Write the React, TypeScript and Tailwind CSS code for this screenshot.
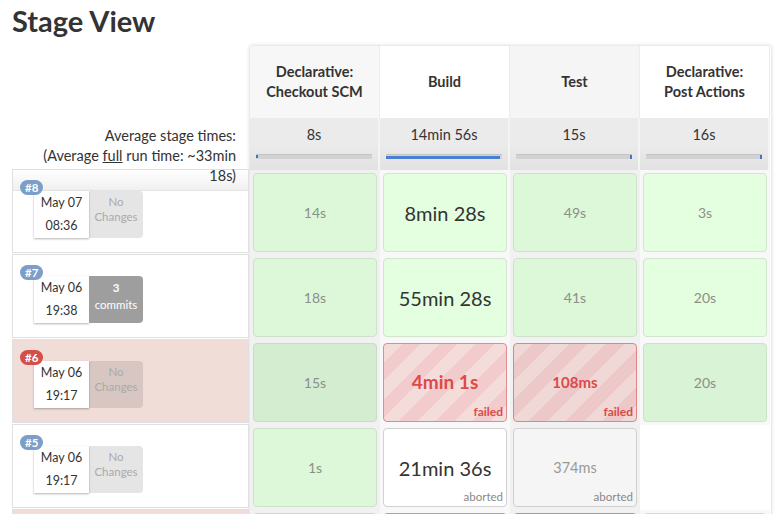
import React from "react";

type Cell = {
  text?: string;
  big?: boolean;
  kind: "ok" | "failed" | "aborted" | "empty";
};

type Run = {
  id: string;
  date: string;
  time: string;
  changes: "none" | string;
  failed?: boolean;
  cells: Cell[];
};

const runs: Run[] = [
  {
    id: "#8",
    date: "May 07",
    time: "08:36",
    changes: "none",
    cells: [
      { text: "14s", kind: "ok" },
      { text: "8min 28s", big: true, kind: "ok" },
      { text: "49s", kind: "ok" },
      { text: "3s", kind: "ok" },
    ],
  },
  {
    id: "#7",
    date: "May 06",
    time: "19:38",
    changes: "3",
    cells: [
      { text: "18s", kind: "ok" },
      { text: "55min 28s", big: true, kind: "ok" },
      { text: "41s", kind: "ok" },
      { text: "20s", kind: "ok" },
    ],
  },
  {
    id: "#6",
    date: "May 06",
    time: "19:17",
    changes: "none",
    failed: true,
    cells: [
      { text: "15s", kind: "ok" },
      { text: "4min 1s", big: true, kind: "failed" },
      { text: "108ms", kind: "failed" },
      { text: "20s", kind: "ok" },
    ],
  },
  {
    id: "#5",
    date: "May 06",
    time: "19:17",
    changes: "none",
    cells: [
      { text: "1s", kind: "ok" },
      { text: "21min 36s", big: true, kind: "aborted" },
      { text: "374ms", kind: "aborted" },
      { kind: "empty" },
    ],
  },
  {
    id: "#4",
    date: "May 06",
    time: "18:02",
    changes: "none",
    failed: true,
    cells: [
      { text: "12s", kind: "ok" },
      { text: "3min 2s", big: true, kind: "failed" },
      { text: "98ms", kind: "failed" },
      { text: "18s", kind: "ok" },
    ],
  },
];

const headers = [
  ["Declarative:", "Checkout SCM"],
  ["Build"],
  ["Test"],
  ["Declarative:", "Post Actions"],
];

const averages = ["8s", "14min 56s", "15s", "16s"];

function Bar({ col }: { col: number }) {
  return (
    <div className="mx-[6px] mt-[9px] h-[5px] bg-[#d2d2d2] border-t border-[#c4c4c4] relative">
      {col === 0 && <div className="absolute left-0 top-0 h-[3px] w-[2px] bg-[#3a78d0]" />}
      {col === 1 && <div className="absolute left-0 right-[2px] top-[1px] h-[3px] bg-[#4a80d2]" />}
      {col >= 2 && <div className="absolute right-0 top-0 h-[4px] w-[2px] bg-[#3a78d0]" />}
    </div>
  );
}

function StageCell({ cell, col, runFailed }: { cell: Cell; col: number; runFailed?: boolean }) {
  const odd = col === 0 || col === 2;
  const wrapBg = odd ? "bg-[#f1f1f1]" : "bg-[#f8f8f8]";
  if (cell.kind === "empty") {
    return <div className="w-[130px] h-[85px] bg-white" />;
  }
  let box = "";
  let textCls = "";
  let label: React.ReactNode = null;
  if (cell.kind === "ok") {
    if (runFailed) {
      box = odd ? "bg-[#d4ecd0] border-[#c9dcc6]" : "bg-[#d9f3d6] border-[#cde0ca]";
    } else {
      box = odd ? "bg-[#ddf7d9] border-[#cfe1cc]" : "bg-[#e4fee0] border-[#d3e4d0]";
    }
    textCls = cell.big ? "text-[20px] text-[#333]" : "text-[14px] text-[#8b9089]";
  } else if (cell.kind === "failed") {
    box =
      col === 1
        ? "border-[#e48a8a] bg-[repeating-linear-gradient(135deg,#f3dcda_0px,#f3dcda_13px,#f2cccc_13px,#f2cccc_26px)]"
        : "border-[#e08484] bg-[repeating-linear-gradient(135deg,#efd8d5_0px,#efd8d5_13px,#ecc8c8_13px,#ecc8c8_26px)]";
    textCls = cell.big
      ? "text-[19px] font-bold text-[#dd4a48]"
      : "text-[15px] font-bold text-[#dd4a48]";
    label = (
      <span className="absolute right-[3px] bottom-[2px] text-[12px] font-bold leading-[14px] text-[#dd4a48]">
        failed
      </span>
    );
  } else {
    box = col === 1 ? "bg-white border-[#d0d0d0]" : "bg-[#f5f5f5] border-[#d0d0d0]";
    textCls = cell.big ? "text-[20px] text-[#333]" : "text-[14.5px] text-[#999]";
    label = (
      <span className="absolute right-[3px] bottom-[2px] text-[11.5px] leading-[14px] text-[#888]">
        aborted
      </span>
    );
  }
  return (
    <div className={`w-[130px] h-[85px] p-[3px] ${wrapBg}`}>
      <div className={`relative h-full rounded-[4px] border flex items-center justify-center ${box}`}>
        <span className={textCls}>{cell.text}</span>
        {label}
      </div>
    </div>
  );
}

function RunInfo({ run, first }: { run: Run; first?: boolean }) {
  return (
    <div
      className={`relative h-[84px] mb-[1px] border border-[#e0e0e0] ${
        run.failed ? "bg-[#f1ddd8]" : "bg-white"
      }`}
    >
      {first ? (
        <div className="h-[21px] bg-gradient-to-b from-white to-[#f0f0f0] border-b border-[#e4e4e4]" />
      ) : (
        <div className="h-[21px]" />
      )}
      <div className="flex pl-[21px]">
        <div className="w-[55px] h-[47px] bg-white shadow-[0_1px_2px_rgba(0,0,0,0.3)] text-center text-[12.5px] leading-[23px] pt-[0px] text-[#333]">
          <div>{run.date}</div>
          <div>{run.time}</div>
        </div>
        {run.changes === "none" ? (
          <div className="w-[54px] h-[47px] rounded-r-[4px] bg-[rgba(0,0,0,0.1)] text-center text-[11.5px] leading-[15px] pt-[3px] text-[#aaa]">
            <div>No</div>
            <div>Changes</div>
          </div>
        ) : (
          <div className="w-[54px] h-[47px] rounded-r-[4px] bg-[#9e9e9e] text-center text-[11.5px] leading-[17px] pt-[3px] text-white">
            <div className="font-bold">{run.changes}</div>
            <div>commits</div>
          </div>
        )}
      </div>
      <div
        className={`absolute left-[7px] top-[10px] h-[15px] px-[5px] rounded-full text-[11.5px] font-bold leading-[15px] text-white ${
          run.failed ? "bg-[#d34f4a]" : "bg-[#7c9ec8]"
        }`}
      >
        {run.id}
      </div>
    </div>
  );
}

export default function App() {
  return (
    <div className="h-[514px] overflow-hidden bg-white pl-[12px] font-['Lato',sans-serif] text-[#333]">
      <div className="h-[46px] pt-[4px]">
        <h2 className="text-[29px] font-bold leading-[34px] text-[#333]">Stage View</h2>
      </div>
      <div className="flex">
        <div className="w-[237px] shrink-0">
          <div className="h-[72px]" />
          <div className="h-[51px] relative z-10 text-right pr-[13px] pt-[8px] text-[14.5px] leading-[20px] text-[#333] whitespace-nowrap">
            <div>Average stage times:</div>
            <div>
              (Average <span className="underline">full</span> run time: ~33min
            </div>
            <div>18s)</div>
          </div>
          {runs.map((r, i) => (
            <RunInfo key={r.id} run={r} first={i === 0} />
          ))}
        </div>
        <div className="w-[521px] shrink-0 ml-[1px] shadow-[0_0_4px_rgba(0,0,0,0.2)]">
          <div className="flex h-[72px]">
            {headers.map((h, i) => (
              <div
                key={i}
                className={`w-[130px] flex flex-col items-center justify-center text-[14.5px] font-bold leading-[20px] text-[#333] border-r border-[#ececec] ${
                  i === 0 ? "bg-[#f7f7f7]" : i === 2 ? "bg-[#f5f5f5]" : "bg-white"
                }`}
              >
                {h.map((l) => (
                  <div key={l}>{l}</div>
                ))}
              </div>
            ))}
          </div>
          <div className="flex h-[52px]">
            {averages.map((a, i) => (
              <div
                key={i}
                className="w-[130px] bg-gradient-to-b from-[#ebebeb] via-[#ebebeb] to-[#e2e2e2] border-r-2 border-[#f4f4f4] pt-[7px]"
              >
                <div className="text-center text-[14.5px] leading-[20px] text-[#333]">{a}</div>
                <Bar col={i} />
              </div>
            ))}
          </div>
          {runs.map((r) => (
            <div key={r.id} className="flex">
              {r.cells.map((c, i) => (
                <StageCell key={i} cell={c} col={i} runFailed={r.failed} />
              ))}
            </div>
          ))}
        </div>
      </div>
    </div>
  );
}
